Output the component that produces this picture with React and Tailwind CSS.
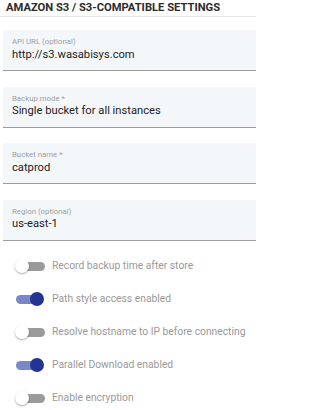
import React from "react";

const fields = [
  { label: "API URL (optional)", value: "http://s3.wasabisys.com" },
  { label: "Backup mode *", value: "Single bucket for all instances" },
  { label: "Bucket name *", value: "catprod" },
  { label: "Region (optional)", value: "us-east-1" },
];

const toggles = [
  { label: "Record backup time after store", on: false },
  { label: "Path style access enabled", on: true },
  { label: "Resolve hostname to IP before connecting", on: false },
  { label: "Parallel Download enabled", on: true },
  { label: "Enable encryption", on: false },
];

function Toggle({ on }) {
  return (
    <div className="relative w-[30px] h-[14px] shrink-0">
      <div
        className={
          on
            ? "absolute left-[1px] right-[2px] top-[2.5px] h-[9px] rounded-full bg-[#7a87c6]"
            : "absolute left-[2px] right-0 top-[2.5px] h-[9px] rounded-full bg-[#9a9a9a]"
        }
      />
      {on ? (
        <div className="absolute right-[1px] top-0 w-[14px] h-[14px] rounded-full bg-[#233591]" />
      ) : (
        <div className="absolute left-0 top-0 w-[14px] h-[14px] rounded-full bg-white shadow-[0_1px_2px_rgba(0,0,0,0.35)]" />
      )}
    </div>
  );
}

export default function App() {
  return (
    <div className="w-[256px] h-[410px] bg-white overflow-hidden font-['Roboto',sans-serif]">
      <div className="h-[17px] border-b border-[#e6e6e6] pl-[6px] pt-[2px] text-[11.2px] leading-[12px] font-bold text-[#2b2b2b] whitespace-nowrap">
        AMAZON S3 / S3-COMPATIBLE SETTINGS
      </div>
      <div className="mt-[13px] ml-[3px] flex flex-col gap-[15.5px]">
        {fields.map((f) => (
          <div
            key={f.label}
            className="h-[41px] bg-[#f4f7fa] border-b border-[#9c9c9c] pl-[9px] pt-[7px]"
          >
            <div className="text-[7.8px] leading-[9px] text-[#9e9e9e] whitespace-nowrap">
              {f.label}
            </div>
            <div className="mt-[1.5px] text-[11.2px] leading-[14px] text-[#222] whitespace-nowrap">
              {f.value}
            </div>
          </div>
        ))}
      </div>
      <div className="mt-[9px] flex flex-col">
        {toggles.map((t) => (
          <div key={t.label} className="h-[33px] flex items-center pl-[15px]">
            <Toggle on={t.on} />
            <span className="ml-[7px] text-[10.3px] text-[#999] whitespace-nowrap">
              {t.label}
            </span>
          </div>
        ))}
      </div>
    </div>
  );
}
